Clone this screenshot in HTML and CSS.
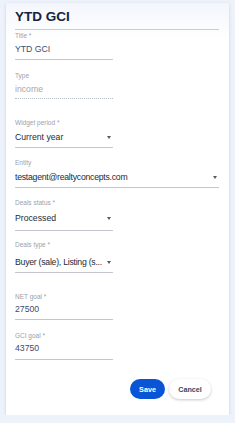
FILE: index.html
```html
<!DOCTYPE html>
<html lang="en">
<head>
    <meta charset="UTF-8">
    <meta name="viewport" content="width=device-width, initial-scale=1.0">
    <title>Edit widget - YTD GCI</title>
    <link rel="stylesheet" href="styles.css">
</head>
<body>

    <div class="card">
        <h1 class="card-title">YTD GCI</h1>

        <!-- Title -->
        <div class="field short f-title">
            <div class="label">Title *</div>
            <div class="value">YTD GCI</div>
        </div>

        <!-- Type (read only) -->
        <div class="field short readonly f-type">
            <div class="label">Type</div>
            <div class="value">income</div>
        </div>

        <div class="field short select f-period">
            <div class="label">Widget period *</div>
            <div class="value"><span class="text">Current year</span><span class="caret"></span></div>
        </div>

        <div class="field select f-entity">
            <div class="label">Entity</div>
            <div class="value"><span class="text">testagent@realtyconcepts.com</span><span class="caret"></span></div>
        </div>

        <div class="field short select f-status">
            <div class="label">Deals status *</div>
            <div class="value"><span class="text">Processed</span><span class="caret"></span></div>
        </div>

        <div class="field short select f-dtype">
            <div class="label">Deals type *</div>
            <div class="value"><span class="text">Buyer (sale), Listing (s...</span><span class="caret"></span></div>
        </div>

        <div class="field short f-net">
            <div class="label">NET goal *</div>
            <div class="value">27500</div>
        </div>

        <div class="field short f-gci">
            <div class="label">GCI goal *</div>
            <div class="value">43750</div>
        </div>

        <div class="actions">
            <button class="btn btn-save">Save</button>
            <button class="btn btn-cancel">Cancel</button>
        </div>
    </div>

</body>
</html>
```

FILE: styles.css
```css
* {
    margin: 0;
    padding: 0;
    box-sizing: border-box;
    font-family: "Liberation Sans", Arial, sans-serif;
}

body {
    background-color: #eef2fa;
    padding: 3px 6px 0 6px;
}

.card {
    background: linear-gradient(#f3f6fc 0, #ffffff 36px);
    height: 412px;
    padding: 5px 10px 0 9px;
    box-shadow: 0 1px 3px rgba(40, 60, 110, 0.18);
    display: flex;
    flex-direction: column;
}

.card-title {
    font-size: 13.5px;
    font-weight: 700;
    color: #16223d;
    line-height: 18px;
    padding-bottom: 3px;
    border-bottom: 1px solid #c9ccd3;
}

.field {
    display: flex;
    flex-direction: column;
    border-bottom: 1px solid #c3c6cc;
}

.field.short {
    width: 98px;
}

.label {
    font-size: 6.5px;
    color: #9ba1ac;
    line-height: 8px;
}

.value {
    font-size: 8.7px;
    color: #3d4c6e;
    line-height: 12px;
    height: 12px;
    display: flex;
    align-items: center;
    justify-content: space-between;
    white-space: nowrap;
}

.select .value {
    color: #232a36;
}

.f-entity .text,
.f-dtype .text {
    letter-spacing: -0.25px;
}

.readonly {
    border-bottom: 1px dotted #b8bcc4;
}

.readonly .value {
    color: #a4a8af;
}

.caret {
    width: 0;
    height: 0;
    border-left: 2.5px solid transparent;
    border-right: 2.5px solid transparent;
    border-top: 3px solid #555b66;
    margin-right: 2px;
}

.f-title { margin-top: 2px; }
.f-title .value { margin-top: 3px; margin-bottom: 4px; }

.f-type { margin-top: 12px; }
.f-type .value { margin-top: 3px; margin-bottom: 3px; }

.f-period { margin-top: 20px; }
.f-period .value { margin-top: 4px; margin-bottom: 4px; }

.f-entity { margin-top: 11px; }
.f-entity .value { margin-top: 4px; margin-bottom: 4px; }

.f-status { margin-top: 11px; }
.f-status .value { margin-top: 5px; margin-bottom: 6px; }

.f-dtype { margin-top: 10px; }
.f-dtype .value { margin-top: 7px; margin-bottom: 4px; }

.f-net { margin-top: 20px; }
.f-net .value { margin-top: 2px; margin-bottom: 4px; }

.f-gci { margin-top: 12px; }
.f-gci .value { margin-top: 2px; margin-bottom: 5px; }

.actions {
    display: flex;
    justify-content: flex-end;
    gap: 4px;
    margin-top: 19px;
    padding-right: 8px;
}

.btn {
    height: 20px;
    border-radius: 10px;
    border: none;
    font-family: "Liberation Sans", Arial, sans-serif;
    font-size: 7.2px;
    font-weight: 700;
    cursor: pointer;
}

.btn-save {
    width: 35px;
    background-color: #0a55d6;
    color: white;
}

.btn-cancel {
    width: 42px;
    background-color: white;
    color: #3a4660;
    box-shadow: 0 1px 3px rgba(0, 0, 0, 0.22);
}
```
